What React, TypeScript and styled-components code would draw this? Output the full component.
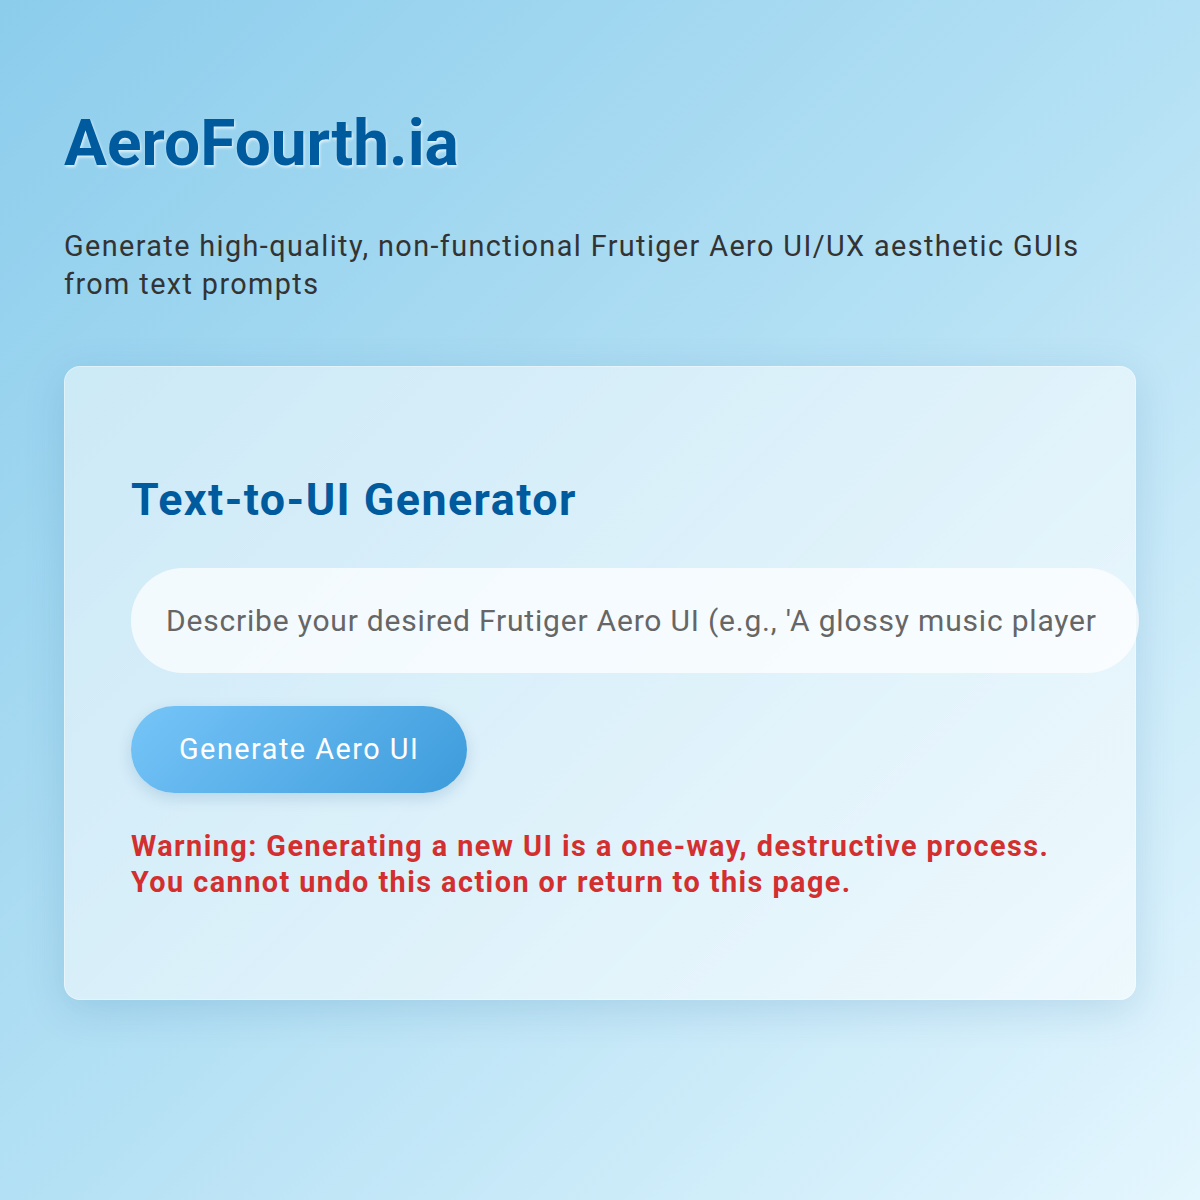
import React from "react";
import styled, { createGlobalStyle } from "styled-components";

const GlobalStyle = createGlobalStyle`
  html, body {
    margin: 0;
    padding: 0;
  }
  body {
    font-family: Roboto, "Liberation Sans", Arial, sans-serif;
    background: linear-gradient(135deg, #8ccdec 0%, #b3e0f4 50%, #e4f6fe 100%);
    min-height: 1200px;
  }
`;

const Page = styled.div`
  box-sizing: border-box;
  min-height: 1200px;
  padding: 64px;
`;

const Title = styled.h1`
  margin: 42px 0 0;
  font-size: 64px;
  font-weight: 700;
  line-height: normal;
  color: #005a9e;
  text-shadow: 1px 2px 3px rgba(255, 255, 255, 0.7);
`;

const Subtitle = styled.p`
  margin: 46px 0 0;
  font-size: 28.8px;
  line-height: 38px;
  letter-spacing: 1.4px;
  color: #333;
`;

const Card = styled.section`
  margin-top: 63px;
  padding: 64px 66px;
  border-radius: 16px;
  background: linear-gradient(
    135deg,
    rgba(255, 255, 255, 0.5) 0%,
    rgba(255, 255, 255, 0.55) 100%
  );
  border: 1px solid rgba(255, 255, 255, 0.35);
  box-shadow: 0 10px 40px rgba(0, 80, 150, 0.15);
`;

const CardTitle = styled.h2`
  margin: 42px 0 0;
  font-size: 44.8px;
  font-weight: 700;
  line-height: normal;
  letter-spacing: 1.45px;
  color: #005a9e;
`;

const PromptInput = styled.input`
  display: block;
  box-sizing: content-box;
  width: 100%;
  margin-top: 42px;
  padding: 35px;
  border: none;
  border-radius: 52px;
  background: rgba(255, 255, 255, 0.72);
  font-family: Roboto, "Liberation Sans", Arial, sans-serif;
  font-size: 30px;
  letter-spacing: 0.8px;
  line-height: 35px;
  height: 35px;
  color: #333;
  outline: none;

  &::placeholder {
    color: #666;
  }
`;

const GenerateButton = styled.button`
  display: block;
  margin-top: 33px;
  padding: 26px 48px;
  border: none;
  border-radius: 50px;
  background: linear-gradient(135deg, #76c5f8 0%, #3d9bdb 100%);
  box-shadow: 0 5px 15px rgba(0, 70, 130, 0.15);
  font-family: Roboto, "Liberation Sans", Arial, sans-serif;
  font-size: 28.8px;
  line-height: 35px;
  letter-spacing: 1.5px;
  color: #fff;
  cursor: pointer;
`;

const Warning = styled.p`
  margin: 35px 0 35px;
  font-size: 28.8px;
  font-weight: 700;
  line-height: 36px;
  letter-spacing: 1.45px;
  color: #d32f2f;
`;

export default function App() {
  return (
    <>
      <GlobalStyle />
      <Page>
        <Title>AeroFourth.ia</Title>
        <Subtitle>
          Generate high-quality, non-functional Frutiger Aero UI/UX aesthetic
          GUIs from text prompts
        </Subtitle>
        <Card>
          <CardTitle>Text-to-UI Generator</CardTitle>
          <PromptInput
            type="text"
            placeholder="Describe your desired Frutiger Aero UI (e.g., 'A glossy music player with bubbles')"
          />
          <GenerateButton>Generate Aero UI</GenerateButton>
          <Warning>
            Warning: Generating a new UI is a one-way, destructive process.
            <br />
            You cannot undo this action or return to this page.
          </Warning>
        </Card>
      </Page>
    </>
  );
}
